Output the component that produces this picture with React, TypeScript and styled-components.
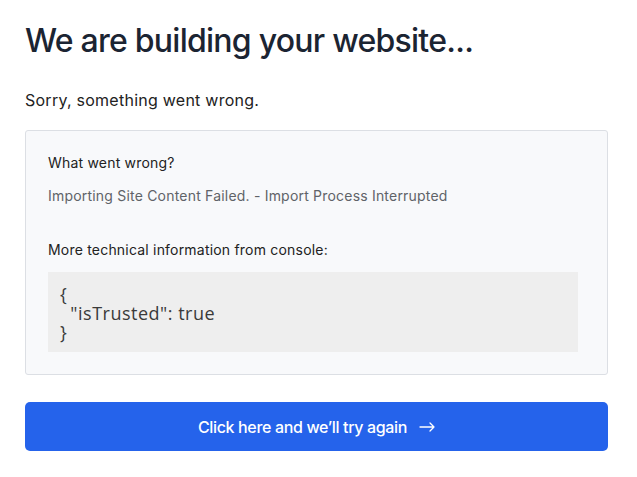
import React from "react";
import styled, { createGlobalStyle } from "styled-components";

const Global = createGlobalStyle`
  html, body { margin: 0; padding: 0; background: #ffffff; }
  body { font-family: Inter, "Noto Sans", sans-serif; color: #1f2937; }
`;

const Page = styled.main`
  width: 583px;
  padding: 0 29px 0 25px;
  display: flex;
  flex-direction: column;
`;

const Title = styled.h1`
  margin: 19px 0 0;
  font-size: 32px;
  line-height: 44px;
  font-weight: 500;
  color: #1b2432;
  letter-spacing: -0.75px;
`;

const Lead = styled.p`
  margin: 25px 0 0;
  font-size: 16px;
  line-height: 24px;
  color: #222;
  letter-spacing: 0.25px;
`;

const Card = styled.section`
  margin-top: 18px;
  box-sizing: border-box;
  border: 1px solid #dcdfe4;
  border-radius: 3px;
  background: #f8f9fb;
  padding: 21px 29px 22px 22px;
  display: flex;
  flex-direction: column;
`;

const Label = styled.p<{ $gap?: number }>`
  margin: ${(p) => p.$gap ?? 0}px 0 0;
  font-size: 14px;
  line-height: 22px;
  color: #222;
  letter-spacing: 0.2px;
`;

const Detail = styled.p`
  margin: 11px 0 0;
  font-size: 14px;
  line-height: 22px;
  color: #5f6368;
  letter-spacing: 0.2px;
`;

const Code = styled.pre`
  margin: 11px 0 0;
  background: #eeeeee;
  padding: 13px 12px 10px;
  font-family: "Open Sans", "Noto Sans", sans-serif;
  font-size: 18px;
  font-weight: 400;
  line-height: 19px;
  letter-spacing: 0.5px;
  color: #3a3a3a;
`;

const Button = styled.button`
  margin-top: 27px;
  height: 49px;
  border: 0;
  border-radius: 5px;
  background: #2563eb;
  color: #ffffff;
  font-family: Inter, "Noto Sans", sans-serif;
  font-size: 16px;
  font-weight: 500;
  letter-spacing: -0.35px;
  display: flex;
  align-items: center;
  justify-content: center;
  gap: 12px;
  cursor: pointer;
`;

const ArrowIcon = () => (
  <svg width="16" height="10" viewBox="0 0 16 10" fill="none" stroke="#ffffff" strokeWidth="1.3" strokeLinecap="round" strokeLinejoin="round">
    <path d="M1 5h14M11 1l4 4-4 4" />
  </svg>
);

export default function App() {
  return (
    <>
      <Global />
      <Page>
        <Title>We are building your website...</Title>
        <Lead>Sorry, something went wrong.</Lead>
        <Card>
          <Label>What went wrong?</Label>
          <Detail>Importing Site Content Failed. - Import Process Interrupted</Detail>
          <Label $gap={32}>More technical information from console:</Label>
          <Code>{`{
  "isTrusted": true
}`}</Code>
        </Card>
        <Button>
          Click here and we’ll try again <ArrowIcon />
        </Button>
      </Page>
    </>
  );
}
